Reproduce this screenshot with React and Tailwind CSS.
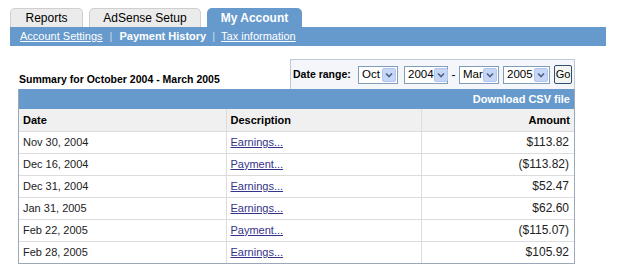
import React from "react";

const rows = [
  { date: "Nov 30, 2004", desc: "Earnings...", amount: "$113.82" },
  { date: "Dec 16, 2004", desc: "Payment...", amount: "($113.82)" },
  { date: "Dec 31, 2004", desc: "Earnings...", amount: "$52.47" },
  { date: "Jan 31, 2005", desc: "Earnings...", amount: "$62.60" },
  { date: "Feb 22, 2005", desc: "Payment...", amount: "($115.07)" },
  { date: "Feb 28, 2005", desc: "Earnings...", amount: "$105.92" },
];

function Select({ value, width, className = "" }) {
  return (
    <div
      className={`shrink-0 flex items-center h-[18px] border border-[#7f9db9] bg-white ${className}`}
      style={{ width }}
    >
      <span className="flex-1 pl-[3px] text-[11.5px] text-black leading-none whitespace-nowrap">{value}</span>
      <span className="shrink-0 flex items-center justify-center w-[14px] h-[14px] mr-[1px] rounded-[2px] bg-[#c6d6f7] border border-[#b2c5ee]">
        <svg width="8" height="6" viewBox="0 0 8 6">
          <path d="M1 1.5 L4 4.5 L7 1.5" fill="none" stroke="#4d6185" strokeWidth="1.6" />
        </svg>
      </span>
    </div>
  );
}

export default function App() {
  return (
    <div
      className="w-[621px] h-[276px] bg-white text-black pt-[8px]"
      style={{ fontFamily: '"Liberation Sans", Arial, sans-serif' }}
    >
      {/* Tabs */}
      <div className="flex items-end gap-[6px] ml-[10px] h-[19px]">
        <div className="w-[73px] h-[19px] flex items-center justify-center rounded-t-[5px] bg-[#ebebeb] border border-b-0 border-[#cfcfcf] text-[12px]">
          Reports
        </div>
        <div className="w-[112px] h-[19px] flex items-center justify-center rounded-t-[5px] bg-[#ebebeb] border border-b-0 border-[#cfcfcf] text-[12px]">
          AdSense Setup
        </div>
        <div className="w-[95px] h-[19px] flex items-center justify-center rounded-t-[5px] bg-[#6699cc] text-white font-bold text-[12px]">
          My Account
        </div>
      </div>

      {/* Sub nav */}
      <div className="ml-[10px] w-[596px] h-[19px] bg-[#6699cc] flex items-center pl-[10px] text-[11px] text-white">
        <a className="underline">Account Settings</a>
        <span className="mx-[7px] text-[#c9dbef]">|</span>
        <span className="font-bold">Payment History</span>
        <span className="mx-[6px] text-[#c9dbef]">|</span>
        <a className="underline">Tax information</a>
      </div>

      <div className="ml-[18px] w-[557px] mt-[13px]">
        {/* Summary + date range */}
        <div className="flex items-end justify-between">
          <div className="text-[10.5px] font-bold pb-[1px] pl-[1px] whitespace-nowrap">
            Summary for October 2004 - March 2005
          </div>
          <div className="shrink-0 w-[285px] h-[30px] bg-[#f4f6f9] border border-b-0 border-[#bfc9d6] flex items-center pl-[2px] text-[12px]">
            <span className="shrink-0 w-[65px] font-bold whitespace-nowrap text-[10.5px]">Date range:</span>
            <Select value="Oct" width={40} />
            <Select value="2004" width={44} className="ml-[6px]" />
            <span className="shrink-0 w-[11px] text-center">-</span>
            <Select value="Mar" width={40} />
            <Select value="2005" width={47} className="ml-[4px]" />
            <span className="shrink-0 ml-[4px] h-[19px] w-[18px] border border-[#2a4f7a] rounded-[2px] bg-[#f5f5f0] flex items-center justify-center text-[11px]">
              Go
            </span>
          </div>
        </div>

        {/* Table */}
        <div className="border border-t-0 border-[#9aa8b8]">
          <div className="h-[20px] bg-[#6699cc] flex items-center justify-end pr-[4px] text-[11px] font-bold text-white">
            Download CSV file
          </div>
          <table className="w-full border-collapse text-[11px]">
            <thead>
              <tr className="h-[22px] bg-[#f0f0f0]">
                <th className="w-[207px] text-left font-bold pl-[4px] border-b border-[#dcdcdc]">Date</th>
                <th className="w-[195px] text-left font-bold pl-[4px] border-l border-b border-[#dcdcdc]">Description</th>
                <th className="text-right font-bold pr-[4px] border-l border-b border-[#dcdcdc]">Amount</th>
              </tr>
            </thead>
            <tbody>
              {rows.map((r, i) => (
                <tr key={i} className="h-[22px]">
                  <td className={`pl-[4px] text-[#222] ${i < rows.length - 1 ? "border-b" : ""} border-[#dcdcdc]`}>{r.date}</td>
                  <td className={`pl-[4px] border-l ${i < rows.length - 1 ? "border-b" : ""} border-[#dcdcdc]`}>
                    <a className="underline text-[#333388]">{r.desc}</a>
                  </td>
                  <td className={`text-right pr-[5px] text-[12px] text-[#222] border-l ${i < rows.length - 1 ? "border-b" : ""} border-[#dcdcdc]`}>{r.amount}</td>
                </tr>
              ))}
            </tbody>
          </table>
        </div>
      </div>
    </div>
  );
}
